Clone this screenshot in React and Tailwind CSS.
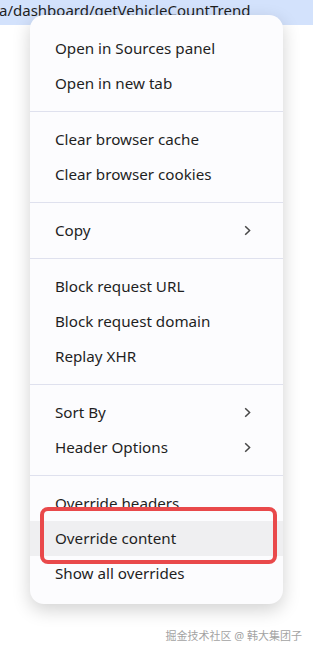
import React from "react";

const Chevron = () => (
  <svg width="7" height="11" viewBox="0 0 7 11" className="text-[#474747]">
    <path d="M1.2 1.2 L5.6 5.5 L1.2 9.8" fill="none" stroke="currentColor" strokeWidth="1.5" />
  </svg>
);

const Item = ({ label, sub, active }) => (
  <div
    className={
      "flex h-[35px] items-center justify-between pl-[25px] pr-[32px] text-[15.2px] text-[#1f1f1f] " +
      (active ? "bg-[#efeff1]" : "")
    }
  >
    <span>{label}</span>
    {sub && <Chevron />}
  </div>
);

const Sep = () => <div className="h-px bg-[#dfe1ee]" />;

const Section = ({ children }) => <div className="py-[10px]">{children}</div>;

export default function App() {
  return (
    <div
      className="relative h-[652px] w-[313px] overflow-hidden bg-white"
      style={{ fontFamily: '"Noto Sans", "Noto Sans CJK SC", sans-serif' }}
    >
      <div className="h-[25px] overflow-hidden bg-[#d3e2fc]">
        <div className="-ml-[1px] mt-0 whitespace-nowrap text-[15px] leading-[20px] text-[#1f1f1f]">
          a/dashboard/getVehicleCountTrend
        </div>
      </div>

      <div className="absolute left-[30px] top-[15px] w-[253px] rounded-[14px] bg-[#fcfcfe] pb-[3px] pt-[6px] shadow-[0_6px_18px_rgba(0,0,0,0.18)]">
        <Section>
          <Item label="Open in Sources panel" />
          <Item label="Open in new tab" />
        </Section>
        <Sep />
        <Section>
          <Item label="Clear browser cache" />
          <Item label="Clear browser cookies" />
        </Section>
        <Sep />
        <Section>
          <Item label="Copy" sub />
        </Section>
        <Sep />
        <Section>
          <Item label="Block request URL" />
          <Item label="Block request domain" />
          <Item label="Replay XHR" />
        </Section>
        <Sep />
        <Section>
          <Item label="Sort By" sub />
          <Item label="Header Options" sub />
        </Section>
        <Sep />
        <Section>
          <Item label="Override headers" />
          <Item label="Override content" active />
          <Item label="Show all overrides" />
        </Section>
      </div>

      <div className="absolute left-[40px] top-[507px] h-[57px] w-[237px] rounded-[8px] border-[4px] border-[#e9494b]" />

      <div className="absolute right-[11px] top-[628px] text-[11px] leading-[16px] text-[#a3a3a3]">
        掘金技术社区 @ 韩大集团子
      </div>
    </div>
  );
}
